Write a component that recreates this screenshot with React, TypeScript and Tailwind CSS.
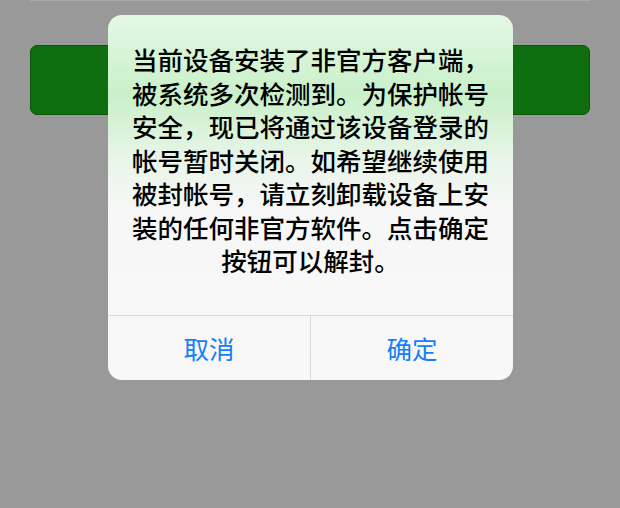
import React from "react";

const lines = [
  "当前设备安装了非官方客户端，",
  "被系统多次检测到。为保护帐号",
  "安全，现已将通过该设备登录的",
  "帐号暂时关闭。如希望继续使用",
  "被封帐号，请立刻卸载设备上安",
  "装的任何非官方软件。点击确定",
  "按钮可以解封。",
];

export default function App() {
  return (
    <div
      className="relative w-[620px] h-[508px] overflow-hidden bg-[#999999]"
      style={{ fontFamily: '"Noto Sans CJK SC", "Noto Sans", sans-serif' }}
    >
      <div className="mx-[30px] h-px bg-[#a9a9a9]" />
      <div className="mx-[30px] mt-[44px] h-[70px] rounded-[7px] border border-[#0a560a] bg-[#0f6e0f]" />

      <div className="absolute left-[108px] top-[15px] w-[405px] h-[365px] rounded-[14px] overflow-hidden flex flex-col bg-[linear-gradient(to_bottom,#e4f8e4_0%,#c9f0c9_22%,#e9f5e9_40%,#f7f7f7_54%,#f8f8f8_100%)]">
        <div className="h-[300px] pt-[27px] flex flex-col items-center text-[25.5px] leading-[33.5px] text-black font-medium">
          {lines.map((l, i) => (
            <div key={i} className="whitespace-nowrap">
              {l}
            </div>
          ))}
        </div>
        <div className="flex flex-1 border-t border-[#d9d9dc]">
          <button className="flex-1 flex items-center justify-center text-[25.5px] text-[#157efb]">
            取消
          </button>
          <div className="w-px bg-[#d9d9dc]" />
          <button className="flex-1 flex items-center justify-center text-[25.5px] text-[#157efb]">
            确定
          </button>
        </div>
      </div>
    </div>
  );
}
